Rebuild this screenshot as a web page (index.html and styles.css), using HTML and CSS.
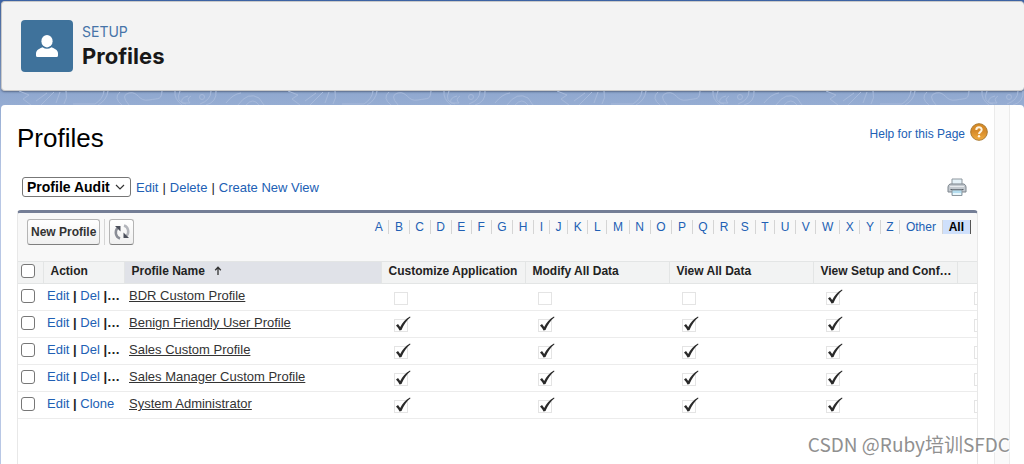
FILE: index.html
```html
<!DOCTYPE html>
<html lang="en">
<head>
<meta charset="utf-8">
<title>Profiles | Setup</title>
<link rel="stylesheet" href="styles.css">
</head>
<body>
<svg class="defs" aria-hidden="true">
  <symbol id="check" viewBox="0 0 18 18">
    <rect x="1.5" y="4.500" width="13" height="12" fill="none" stroke="#c9c9c9" stroke-dasharray="1 1"/>
    <path d="M3 10.500 5 9 7.200 12C9.500 7.500 12.500 4 17 1.500L17.500 2.300C13.500 5.500 11 9.500 8.500 15L6.500 15.500C5.500 13.500 4.500 12 3 10.500Z" fill="#2a2a2a"/>
  </symbol>
  <symbol id="empty" viewBox="0 0 18 18">
    <rect x="1.500" y="4.500" width="13" height="12" fill="none" stroke="#c9c9c9" stroke-dasharray="1 1"/>
  </symbol>
</svg>
<header class="setup-header">
  <div class="setup-icon">
    <svg width="24" height="24" viewBox="0 0 24 24" fill="#fff"><ellipse cx="12" cy="7.200" rx="5.600" ry="6.200"/><path d="M1 21.500V19.500C1 16 4.500 14.500 7.500 13.200Q12 16.500 16.500 13.200C19.500 14.500 23 16 23 19.500V21.500Q23 23 21.500 23H2.500Q1 23 1 21.500Z"/></svg>
  </div>
  <div><p class="eyebrow">SETUP</p><h1 class="setup-title">Profiles</h1></div>
</header>
<div class="band">
  <svg width="100%" height="14" aria-hidden="true">
    <defs><pattern id="topo" width="269" height="14" patternUnits="userSpaceOnUse">
      <path d="M18 0 28 4 22 8 30 14M35 10 46 2M40 14 53 1M55 12 59 1M63 13Q67 7 65 0M72 13 94 13Q102 8 103 0M97 14Q106 9 107 0M121 14Q112 7 119 1M128 14Q119 4 128 2C138 0 137 11 148 9S160 9 161 0M174 0Q173 8 181 14M179 0Q174 11 185 13M187 5Q179 7 181 12H189Q185 8 190 5M215 0Q216 11 205 14M210 0Q210 9 199 13M225 12Q232 3 240 2M237 14Q247 0 258 7L263 14M245 14Q252 6 258 14" fill="none" stroke="#a6b9da"/><circle cx="201" cy="6" r="2.500" fill="none" stroke="#a6b9da"/>
    </pattern></defs><rect width="100%" height="14" fill="url(#topo)"/>
  </svg>
</div>
<div class="page">
<main class="content">
  <div class="title-row">
    <h2 class="title">Profiles</h2>
    <a class="help" href="#">Help for this Page
      <svg width="18" height="18" viewBox="0 0 18 18"><defs><linearGradient id="orange" x2="0" y2="1"><stop stop-color="#d98b24"/><stop offset=".45" stop-color="#d58a2a"/><stop offset="1" stop-color="#f3ad3e"/></linearGradient></defs><circle cx="9" cy="9" r="8.300" fill="url(#orange)" stroke="#a97830"/><path d="M6.300 7C6.300 3.500 11.700 3.500 11.700 6.700C11.700 8.900 9 8.800 9 11" fill="none" stroke="#fff4df" stroke-width="2"/><circle cx="9" cy="13.300" r="1.200" fill="#fff4df"/></svg>
    </a>
  </div>
  <div class="view-row">
    <select class="view" aria-label="View"><option>Profile Audit</option></select>
    <nav class="view-links"><a href="#">Edit</a><span>|</span><a href="#">Delete</a><span>|</span><a href="#">Create New View</a></nav>
    <button class="print" aria-label="Print"><svg width="20" height="19" viewBox="0 0 20 19"><path d="M5 8V1H15V8" fill="#e6f2f8" stroke="#8e979e"/><path d="M3 6H17Q19 7 19 9V14H1V9Q1 7 3 6Z" fill="#c3c9cf" stroke="#7c858d"/><path d="M3 8.500H17" stroke="#e8ebee"/><path d="M3.500 11.500H16.500" stroke="#596168"/><path d="M5 12H15V17.500H5Z" fill="#b5def0" stroke="#8e979e"/><path d="M6 16H14" stroke="#e9f7fc" stroke-width="2"/></svg></button>
  </div>
  <section class="list">
    <div class="toolbar">
      <button class="btn">New Profile</button><span class="rule"></span>
      <button class="btn refresh" aria-label="Refresh"><svg width="18" height="18" viewBox="0 0 18 18" fill="none"><path d="M7 15.500C2.500 14 1.500 8.500 4.500 5" stroke="#8a8d96" stroke-width="2.500"/><path d="M2 3H7.500V8.500Z" fill="#4b4f5b"/><path d="M11 2.500C15.500 4 16.500 9.500 13.500 13" stroke="#b4b6bc" stroke-width="2.500"/><path d="M16 15H10.500V9.500Z" fill="#4b4f5b"/></svg></button>
      <nav class="rolodex" aria-label="Filter by letter"><a href="#">A</a><a href="#">B</a><a href="#">C</a><a href="#">D</a><a href="#">E</a><a href="#">F</a><a href="#">G</a><a href="#">H</a><a href="#">I</a><a href="#">J</a><a href="#">K</a><a href="#">L</a><a href="#">M</a><a href="#">N</a><a href="#">O</a><a href="#">P</a><a href="#">Q</a><a href="#">R</a><a href="#">S</a><a href="#">T</a><a href="#">U</a><a href="#">V</a><a href="#">W</a><a href="#">X</a><a href="#">Y</a><a href="#">Z</a><a href="#">Other</a><a class="current" href="#">All</a></nav>
    </div>
    <table class="grid">
      <colgroup><col class="c-check"><col class="c-action"><col class="c-name"><col class="c-perm"><col class="c-perm"><col class="c-perm"><col class="c-perm"><col class="c-more"></colgroup>
      <thead><tr><th><input type="checkbox" aria-label="Select all"></th><th>Action</th><th class="sorted">Profile Name <svg width="8" height="9" viewBox="0 0 8 9"><path d="M4 9V1.500M1.200 4.200 4 1.200 6.800 4.200" fill="none" stroke="#333" stroke-width="1.300"/></svg></th><th>Customize Application</th><th>Modify All Data</th><th>View All Data</th><th>View Setup and Conf…</th><th></th></tr></thead>
      <tbody>
        <tr><td><input type="checkbox" aria-label="Select BDR Custom Profile"></td><td><a href="#">Edit</a> <b>|</b> <a href="#">Del</a> <b>|…</b></td><td><a class="name" href="#">BDR Custom Profile</a></td><td><svg class="mark"><use href="#empty"/></svg></td><td><svg class="mark"><use href="#empty"/></svg></td><td><svg class="mark"><use href="#empty"/></svg></td><td><svg class="mark"><use href="#check"/></svg></td><td><svg class="mark"><use href="#empty"/></svg></td></tr>
        <tr><td><input type="checkbox" aria-label="Select Benign Friendly User Profile"></td><td><a href="#">Edit</a> <b>|</b> <a href="#">Del</a> <b>|…</b></td><td><a class="name" href="#">Benign Friendly User Profile</a></td><td><svg class="mark"><use href="#check"/></svg></td><td><svg class="mark"><use href="#check"/></svg></td><td><svg class="mark"><use href="#check"/></svg></td><td><svg class="mark"><use href="#check"/></svg></td><td><svg class="mark"><use href="#empty"/></svg></td></tr>
        <tr><td><input type="checkbox" aria-label="Select Sales Custom Profile"></td><td><a href="#">Edit</a> <b>|</b> <a href="#">Del</a> <b>|…</b></td><td><a class="name" href="#">Sales Custom Profile</a></td><td><svg class="mark"><use href="#check"/></svg></td><td><svg class="mark"><use href="#check"/></svg></td><td><svg class="mark"><use href="#check"/></svg></td><td><svg class="mark"><use href="#check"/></svg></td><td><svg class="mark"><use href="#empty"/></svg></td></tr>
        <tr><td><input type="checkbox" aria-label="Select Sales Manager Custom Profile"></td><td><a href="#">Edit</a> <b>|</b> <a href="#">Del</a> <b>|…</b></td><td><a class="name" href="#">Sales Manager Custom Profile</a></td><td><svg class="mark"><use href="#check"/></svg></td><td><svg class="mark"><use href="#check"/></svg></td><td><svg class="mark"><use href="#check"/></svg></td><td><svg class="mark"><use href="#check"/></svg></td><td><svg class="mark"><use href="#empty"/></svg></td></tr>
        <tr><td><input type="checkbox" aria-label="Select System Administrator"></td><td><a href="#">Edit</a> <b>|</b> <a href="#">Clone</a></td><td><a class="name" href="#">System Administrator</a></td><td><svg class="mark"><use href="#check"/></svg></td><td><svg class="mark"><use href="#check"/></svg></td><td><svg class="mark"><use href="#check"/></svg></td><td><svg class="mark"><use href="#check"/></svg></td><td><svg class="mark"><use href="#empty"/></svg></td></tr>
      </tbody>
    </table>
  </section>
</main>
<div class="track"></div>
</div>
<div class="watermark">CSDN @Ruby培训SFDC</div>
</body>
</html>
```

FILE: styles.css
```css
* { box-sizing: border-box; }
body {
  margin: 0;
  min-height: 100vh;
  padding: 1px 0 0 1px;
  display: flex;
  flex-direction: column;
  overflow: hidden;
  font-family: "Liberation Sans", Arial, sans-serif;
  font-size: 13px;
  color: #222;
  background: linear-gradient(#3c63a5, #91a9d0 95px, #b8c7e5 180px);
}
h1, h2, p { margin: 0; }
a { color: #2160b4; text-decoration: none; }
.defs { position: absolute; width: 0; height: 0; }
.setup-header {
  display: flex;
  align-items: center;
  gap: 9px;
  height: 90px;
  padding: 0 19px;
  background: #f3f3f3;
  border: 1px solid #c9c9c9;
  border-right: 0;
  border-radius: 4px;
  box-shadow: 0 1px 2px #5a6b8a;
}
.setup-icon {
  display: grid;
  place-items: center;
  width: 52px;
  height: 52px;
  border-radius: 4px;
  background: #3f729b;
}
.eyebrow { font: 14px/20px Inter, sans-serif; color: #4674a8; }
.setup-title { font: bold 22px/28px Inter, sans-serif; color: #181818; }
.band { height: 14px; }
.band svg { display: block; }
.page {
  flex: 1;
  display: flex;
  background: #fff;
  border-radius: 4px 4px 0 0;
  overflow: hidden;
}
.content {
  flex: 1;
  min-width: 0;
  display: flex;
  flex-direction: column;
  padding: 17px 16px 0;
}
.track {
  width: 16px;
  margin-right: 14px;
  background: #fafafa;
  border: solid #ebebeb;
  border-width: 0 1px;
}
.title-row { display: flex; justify-content: space-between; height: 50px; }
.title { font-size: 26px; font-weight: normal; line-height: 32px; color: #000; }
.help {
  display: flex;
  align-items: center;
  gap: 5px;
  height: 24px;
  margin-right: -10px;
  font-size: 12px;
}
.help svg { margin-bottom: 5px; }
.view-row { display: flex; align-items: center; height: 38px; padding: 0 11px 8px 5px; }
.view {
  appearance: none;
  width: 109px;
  height: 20px;
  padding: 0 4px;
  border: 1px solid #777;
  border-radius: 3px;
  color: #000;
  font: bold 14px/18px "Liberation Sans", Arial, sans-serif;
  background: #fff url("data:image/svg+xml,%3Csvg xmlns='http://www.w3.org/2000/svg' width='10' height='6'%3E%3Cpath d='M1 1l4 4 4-4' fill='none' stroke='%23333' stroke-width='1.200'/%3E%3C/svg%3E") no-repeat right 5px center;
}
.view-links { display: flex; gap: 4px; margin-left: 5px; }
.print { margin-left: auto; padding: 0; border: 0; background: none; height: 19px; }
.list {
  flex: 1;
  border: solid #e8e8e8;
  border-width: 0 1px;
  border-top: 3px solid #747e96;
  border-radius: 4px 4px 0 0;
  overflow: hidden;
}
.toolbar {
  display: flex;
  align-items: flex-start;
  height: 48px;
  padding: 6px 6px 0 9px;
  background: #f8f8f8;
}
.btn {
  height: 26px;
  padding: 0 3px;
  border: 1px solid #b5b5b5;
  border-bottom-color: #7f7f7f;
  border-radius: 3px;
  background: linear-gradient(#fff, #f0f0f0);
  color: #333;
  font: bold 12px/20px "Liberation Sans", Arial, sans-serif;
}
.rule { width: 1px; height: 26px; margin: 0 4px; background: #d5d5d5; }
.refresh { display: grid; place-items: center; width: 25px; }
.rolodex { display: flex; width: 602px; margin-left: auto; font-size: 12px; line-height: 14px; padding-top: 1px; text-align: center; }
.rolodex a { flex-grow: 1; padding: 0 5px; border-right: 1px solid #d5d5d5; }
.rolodex .current { flex-grow: 0; padding: 0 6px; border-color: #555; background: #cfe0fb; color: #000; font-weight: bold; }
.grid { width: 100%; table-layout: fixed; border-collapse: collapse; }
.c-check { width: 25px; }
.c-action { width: 81px; }
.c-perm { width: 144px; }
.c-more { width: 20px; }
.grid th {
  height: 22px;
  padding: 0 0 3px 7px;
  background: #f2f3f3;
  border: 1px solid #e3e5e5;
  text-align: left;
  font-size: 12px;
  line-height: 16px;
  white-space: nowrap;
}
.grid th:first-child, .grid td:first-child { padding: 0 0 3px 3px; border-left: 0; }
.grid th:last-child { border-right: 0; }
.grid .sorted { background: #e0e2e8; }
.sorted svg { margin-left: 6px; }
.grid td {
  height: 27px;
  padding: 0 0 2px 4px;
  border-bottom: 1px solid #ececec;
  line-height: 16px;
  white-space: nowrap;
  overflow: hidden;
}
.grid td:nth-child(3) { padding-left: 5px; }
.grid td:nth-child(n+4) { padding: 0 0 0 12px; }
.grid td:last-child { padding-left: 16px; }
.grid b { color: #222; }
.name { color: #333; text-decoration: underline; }
.mark { display: block; width: 18px; height: 18px; }
input[type="checkbox"] {
  appearance: none;
  display: block;
  width: 14px;
  height: 14px;
  margin: 0;
  border: 1px solid #777;
  border-radius: 3px;
  background: #fff;
}
.watermark {
  position: absolute;
  right: 14px;
  bottom: 6px;
  font: 19px/28px "Noto Sans CJK SC", sans-serif;
  color: #909090;
  text-shadow: 1px 1px 0 #fff;
}
```
